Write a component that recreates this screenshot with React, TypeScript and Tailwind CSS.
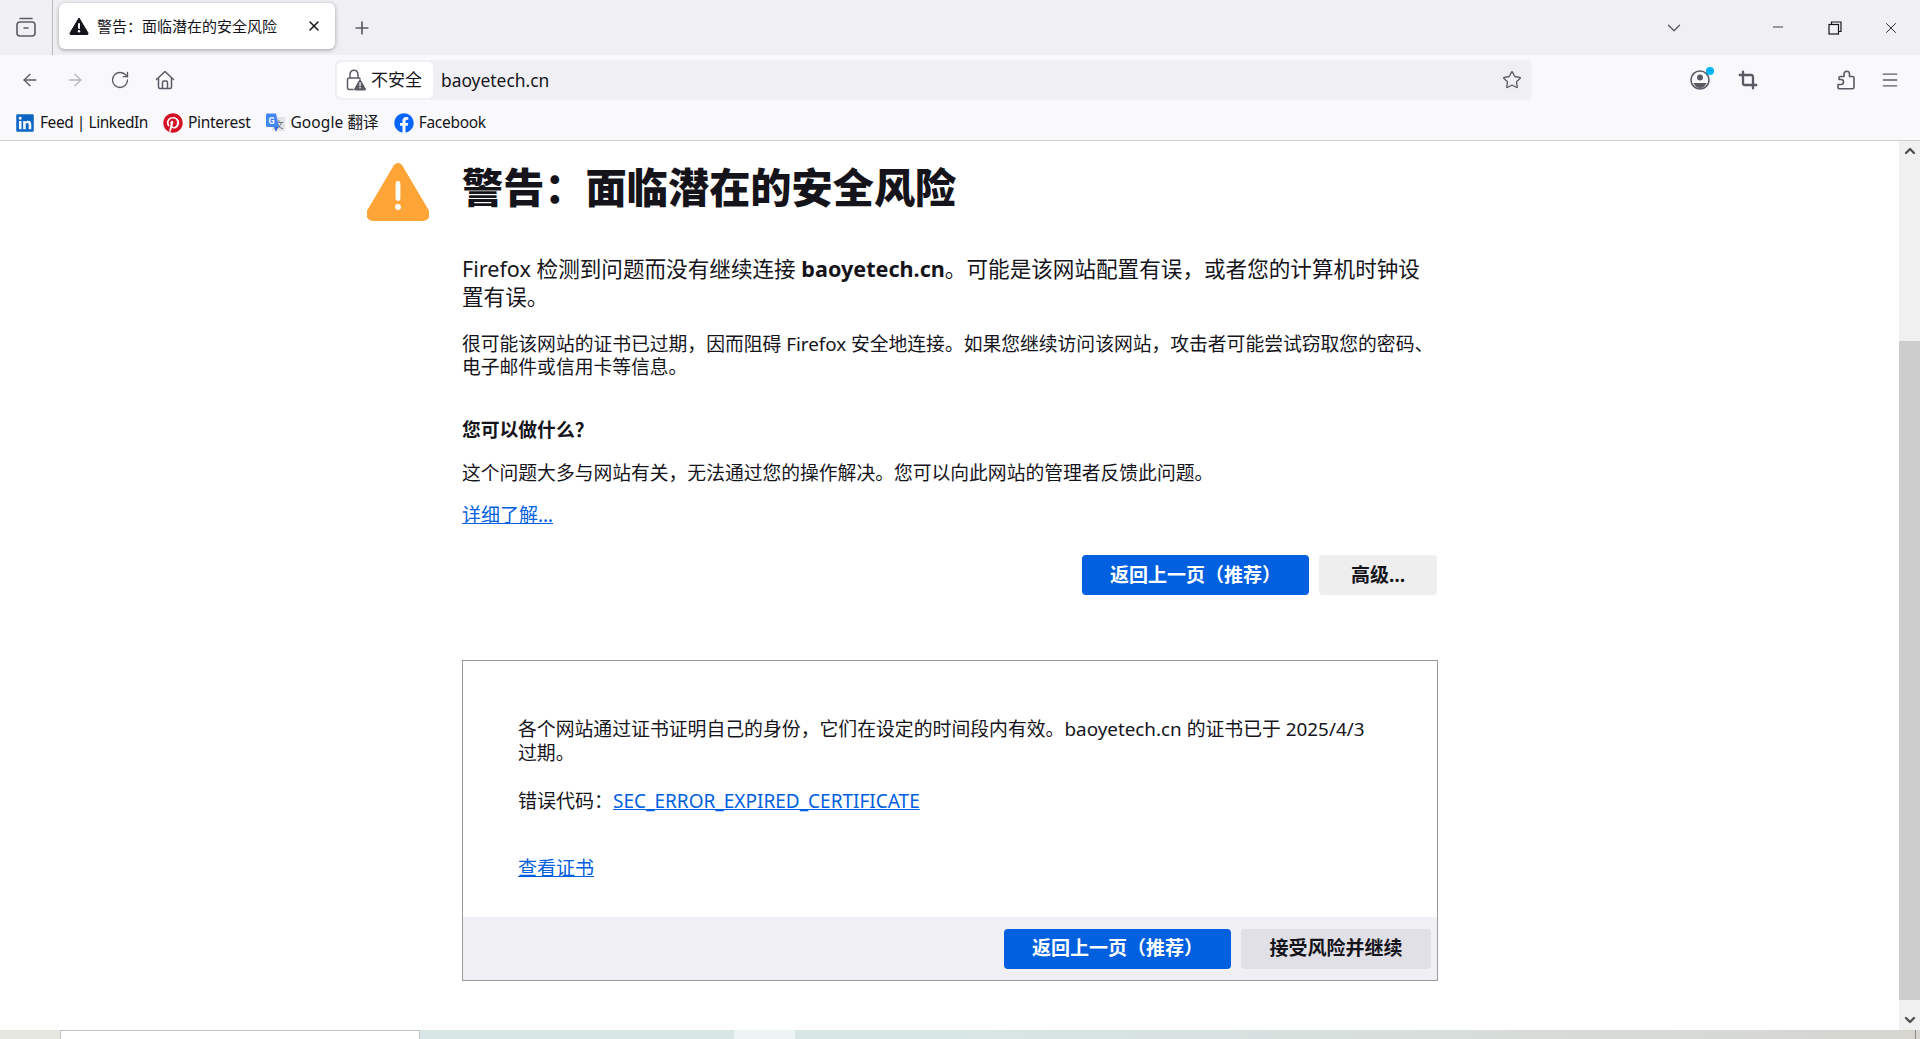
import React from 'react';
import { FaLinkedin, FaPinterest, FaFacebook } from 'react-icons/fa';
import { ArrowLeft, ArrowRight, RotateCw, ChevronDown, X, Plus, Minus, Star, Menu, Crop, ChevronUp } from 'lucide-react';

// fullwidth punctuation, kept as escapes
const TITLE = '警告\uFF1A面临潜在的安全风险';
const BACK = '返回上一页\uFF08推荐\uFF09';

const TabsIcon = () => (
  <svg width="20" height="20" viewBox="0 0 20 20" fill="none" stroke="#5b5b66" strokeWidth="1.6" strokeLinecap="round">
    <rect x="1" y="5" width="18" height="14" rx="3" />
    <path d="M4 1.5h12" />
    <path d="M8 11h4" />
  </svg>
);

const WarnIcon = () => (
  <svg width="20" height="18" viewBox="0 0 20 18">
    <path d="M10 1 L19 16 Q19.4 17.5 18 17.5 L2 17.5 Q0.6 17.5 1 16 Z" fill="#15141a" stroke="#15141a" strokeLinejoin="round" />
    <rect x="9" y="6" width="2" height="6" rx="1" fill="#fff" />
    <circle cx="10" cy="14.3" r="1.2" fill="#fff" />
  </svg>
);

const HomeIcon = () => (
  <svg width="20" height="20" viewBox="0 0 20 20" fill="none" stroke="#5b5b66" strokeWidth="1.5" strokeLinejoin="round">
    <path d="M1.5 9.5 L10 1.5 L18.5 9.5" strokeLinecap="round" />
    <path d="M3.5 8 V17 Q3.5 18.5 5 18.5 H15 Q16.5 18.5 16.5 17 V8" />
    <path d="M7.5 18.5 V12.5 Q7.5 11 9 11 H11 Q12.5 11 12.5 12.5 V18.5" />
  </svg>
);

const LockWarnIcon = () => (
  <svg width="20" height="22" viewBox="0 0 20 22" fill="none">
    <path d="M4 9 V6 Q4 1.2 8 1.2 Q12 1.2 12 6 V9" stroke="#5b5b66" strokeWidth="1.5" />
    <path d="M7 20.5 H3.5 Q1.5 20.5 1.5 18.5 V11 Q1.5 9 3.5 9 H12.5 Q13.5 9 14 9.5" stroke="#5b5b66" strokeWidth="1.5" strokeLinecap="round" />
    <path d="M14 10.5 L19.5 20 Q19.8 21 19 21 H9 Q8.2 21 8.5 20 Z" fill="#5b5b66" stroke="#5b5b66" strokeLinejoin="round" />
    <rect x="13.4" y="13.5" width="1.3" height="3.6" fill="#fff" />
    <rect x="13.4" y="18" width="1.3" height="1.3" fill="#fff" />
  </svg>
);

const AccountIcon = () => (
  <svg width="20" height="20" viewBox="0 0 20 20" fill="none">
    <circle cx="10" cy="10" r="9" stroke="#5b5b66" strokeWidth="1.6" />
    <circle cx="10" cy="7.5" r="3" fill="#5b5b66" />
    <path d="M3.5 13 H16.5 Q14.5 18 10 18 Q5.5 18 3.5 13 Z" fill="#5b5b66" />
  </svg>
);

const ExtensionIcon = () => (
  <svg width="20" height="20" viewBox="0 0 20 20" fill="none" stroke="#5b5b66" strokeWidth="1.6" strokeLinejoin="round">
    <path d="M11 1.2 Q13.5 1.5 13.5 4 V6.5 H16.5 Q18 6.5 18 8 V17 Q18 18.8 16.5 18.8 H3.5 Q2 18.8 2 17 V14.5 H5 Q7.5 14.5 7.5 12 Q7.5 9.5 5 9.5 H3 V8 Q3 6.5 4.5 6.5 H8 V4 Q8 1.5 11 1.2 Z" />
  </svg>
);

const GoogleTranslateIcon = () => (
  <svg width="20" height="20" viewBox="0 0 20 20">
    <rect x="7" y="4" width="13" height="14" rx="1" fill="#e3e3e3" />
    <text x="14" y="15" fontSize="9" fill="#666" textAnchor="middle" fontFamily="Noto Sans CJK SC">文</text>
    <path d="M1 1.5 Q1 0.5 2 0.5 H11 L14 14 H2 Q1 14 1 13 Z" fill="#4285f4" />
    <path d="M9 14 L11 19 L13 14 Z" fill="#3367d6" />
    <text x="6.5" y="10.5" fontSize="9" fontWeight="700" fill="#fff" textAnchor="middle" fontFamily="Roboto">G</text>
  </svg>
);

const WarningBig = () => (
  <svg width="62" height="58" viewBox="0 0 62 58">
    <path d="M31 5 L57 49 Q59 53 55 53 H7 Q3 53 5 49 Z" fill="#ffa436" stroke="#ffa436" strokeWidth="10" strokeLinejoin="round" />
    <rect x="28.6" y="18" width="4.8" height="20" rx="2.4" fill="#fff" />
    <circle cx="31" cy="44" r="3" fill="#fff" />
  </svg>
);

const bookmarks = [
  { name: 'Feed | LinkedIn', track: 'tracking-[-0.45px]', icon: <FaLinkedin className="text-[#0a66c2] text-[20px]" /> },
  { name: 'Pinterest', track: 'tracking-[-0.3px]', icon: <FaPinterest className="text-[#d50f25] text-[20px]" /> },
  { name: 'Google 翻译', track: 'tracking-[0.1px]', icon: <GoogleTranslateIcon /> },
  { name: 'Facebook', track: 'tracking-[-0.3px]', icon: <FaFacebook className="text-[#0866ff] text-[20px]" /> },
];

export default function App() {
  return (
    <div className="h-[1039px] overflow-hidden flex flex-col bg-white text-[#15141a] font-['Noto_Sans','Noto_Sans_CJK_SC',sans-serif]">
      {/* tab strip */}
      <div className="h-[55px] bg-[#f0f0f4] flex items-center shrink-0">
        <div className="w-[53px] h-full border-r border-[#b8b8bc] flex items-center justify-center pb-[1px]">
          <TabsIcon />
        </div>
        <div className="ml-[6px] w-[276px] h-[46px] mb-[3px] bg-white rounded-[6px] shadow-[0_1px_4px_rgba(0,0,0,0.35)] flex items-center pl-[10px] pr-[13px] gap-[8px]">
          <WarnIcon />
          <span className="text-[15px] flex-1 whitespace-nowrap pt-[1px]">{TITLE}</span>
          <X size={16} strokeWidth={2.2} />
        </div>
        <Plus size={20} className="ml-[17px] text-[#5b5b66]" />
        <div className="flex-1" />
        <ChevronDown size={22} strokeWidth={1.5} className="text-[#5b5b66] mr-[85px]" />
        <Minus size={16} strokeWidth={1.2} className="mr-[42px] -translate-y-[1px]" />
        <svg width="14" height="14" viewBox="0 0 14 14" fill="none" stroke="#15141a" strokeWidth="1.2" className="mr-[40px]">
          <rect x="1" y="3.5" width="9.5" height="9.5" />
          <path d="M3.5 3.5 V1 H13 V10.5 H10.5" />
        </svg>
        <X size={18} strokeWidth={1.2} className="mr-[20px]" />
      </div>

      {/* navigation toolbar */}
      <div className="h-[52px] bg-[#f9f9fb] flex items-center shrink-0 pb-[2px]">
        <div className="flex items-center w-[335px] pl-[20px] gap-[25px]">
          <ArrowLeft size={20} strokeWidth={1.6} className="text-[#5b5b66]" />
          <ArrowRight size={20} strokeWidth={1.6} className="text-[#b6b6bc]" />
          <RotateCw size={20} strokeWidth={1.6} className="text-[#5b5b66]" />
          <HomeIcon />
        </div>
        <div className="w-[1197px] h-[40px] bg-[#f0f0f4] rounded-[5px] flex items-center p-[2px]">
          <div className="w-[96px] h-[36px] bg-white rounded-[5px] flex items-center gap-[5px] pl-[9px]">
            <LockWarnIcon />
            <span className="text-[17px] whitespace-nowrap">不安全</span>
          </div>
          <span className="ml-[8px] text-[17.4px] flex-1">baoyetech.cn</span>
          <Star size={20} strokeWidth={1.6} className="text-[#5b5b66] mr-[8px]" />
        </div>
        <div className="flex-1 flex items-center relative">
          <div className="ml-[158px] relative">
            <AccountIcon />
            <span className="absolute -top-[3px] -right-[4px] w-[8px] h-[8px] rounded-full bg-[#00b3f4]" />
          </div>
          <Crop size={20} strokeWidth={2.8} className="ml-[28px] text-[#5b5b66]" />
          <div className="ml-[78px]"><ExtensionIcon /></div>
          <Menu size={20} strokeWidth={1.6} className="ml-[24px] text-[#5b5b66]" />
        </div>
      </div>

      {/* bookmarks */}
      <div className="h-[31px] bg-[#f9f9fb] border-b border-[#cfcfd1] flex items-center pl-[15px] pb-[2px] gap-[15px] shrink-0 box-content">
        {bookmarks.map((b) => (
          <div key={b.name} className={`flex items-center gap-[5px] text-[15.5px] whitespace-nowrap ${b.track}`}>
            {b.icon}
            <span>{b.name}</span>
          </div>
        ))}
      </div>

      {/* page */}
      <div className="flex-1 flex min-h-0">
        <div className="flex-1 min-w-0 pl-[367px]">
          <div className="w-[1071px]">
            <div className="flex mt-[16px]">
              <div className="w-[95px] shrink-0 pt-[6px]"><WarningBig /></div>
              <h1 className="text-[41.2px] font-black leading-[60px] whitespace-nowrap">{TITLE}</h1>
            </div>
            <div className="pl-[95px]">
              <p className="mt-[34px] text-[21.6px] leading-[28px]">
                Firefox 检测到问题而没有继续连接 <b>baoyetech.cn</b>{'。可能是该网站配置有误\uFF0C或者您的计算机时钟设'}<br />置有误。
              </p>
              <p className="mt-[22px] text-[18.8px] leading-[23px]">
                {'很可能该网站的证书已过期\uFF0C因而阻碍 Firefox 安全地连接。如果您继续访问该网站\uFF0C攻击者可能尝试窃取您的密码、'}<br />电子邮件或信用卡等信息。
              </p>
              <h2 className="mt-[37px] text-[18.8px] font-bold leading-[28px]">{'您可以做什么\uFF1F'}</h2>
              <p className="mt-[15px] text-[18.8px] leading-[28px]">{'这个问题大多与网站有关\uFF0C无法通过您的操作解决。您可以向此网站的管理者反馈此问题。'}</p>
              <a className="block mt-[14px] text-[19px] leading-[28px] text-[#0060df] underline">详细了解…</a>
              <div className="flex justify-end gap-[10px] mt-[26px] mr-[1px]">
                <button className="w-[227px] h-[40px] rounded-[4px] bg-[#0060df] text-white text-[19px] font-bold">{BACK}</button>
                <button className="w-[118px] h-[40px] rounded-[4px] bg-[#eeeeef] text-[19px] font-bold">高级…</button>
              </div>
              <div className="mt-[65px] h-[321px] border border-[#9a9a9e] flex flex-col">
                <div className="flex-1 pl-[55px] pr-[50px] pt-[56px] text-[19px] leading-[24px]">
                  <p className="text-[18.85px]">{'各个网站通过证书证明自己的身份\uFF0C它们在设定的时间段内有效。baoyetech.cn 的证书已于 2025/4/3'}<br />过期。</p>
                  <p className="mt-[24px]">{'错误代码\uFF1A'}<a className="text-[#0060df] underline">SEC_ERROR_EXPIRED_CERTIFICATE</a></p>
                  <a className="block mt-[43px] text-[#0060df] underline">查看证书</a>
                </div>
                <div className="h-[63px] bg-[#f0f0f4] flex justify-end items-center gap-[10px] pr-[6px]">
                  <button className="w-[227px] h-[40px] rounded-[4px] bg-[#0060df] text-white text-[19px] font-bold">{BACK}</button>
                  <button className="w-[190px] h-[40px] rounded-[4px] bg-[#e0e0e6] text-[19px] font-bold">接受风险并继续</button>
                </div>
              </div>
            </div>
          </div>
        </div>
        {/* scrollbar */}
        <div className="w-[21px] bg-[#f0f0f0] flex flex-col items-center shrink-0">
          <ChevronUp size={16} strokeWidth={3.5} className="text-[#505050] mt-[2px] h-[16px]" />
          <div className="w-full h-[659px] bg-[#cdcdcd] mt-[182px]" />
          <div className="flex-1 flex items-end pb-[2px]">
            <ChevronDown size={16} strokeWidth={3.5} className="text-[#505050]" />
          </div>
        </div>
      </div>

      {/* desktop wallpaper strip */}
      <div className="h-[9px] flex shrink-0 overflow-hidden bg-gradient-to-r from-[#d8e6e5] via-[#d8e6e5] to-[#d6d5d0]">
        <div className="w-[60px] bg-[#e6e7e1]" />
        <div className="w-[360px] bg-white border-t border-x border-[#c4c4c4]" />
        <div className="w-[314px]" />
        <div className="w-[61px] bg-[#edf4f3]" />
        <div className="flex-1" />
        <div className="w-[1px] bg-[#8a8a8a] mr-[4px]" />
      </div>
    </div>
  );
}
